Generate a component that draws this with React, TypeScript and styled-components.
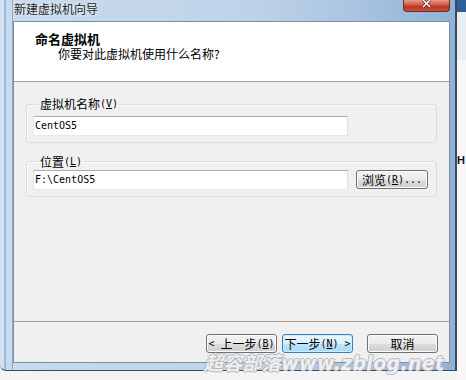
import React from 'react';
import styled, { createGlobalStyle } from 'styled-components';

const GlobalStyle = createGlobalStyle`
  html, body {
    margin: 0;
    padding: 0;
  }
  body {
    background: #f2f2f2;
    font-family: "Noto Sans CJK SC", "Liberation Sans", sans-serif;
    font-size: 12px;
    color: #000;
  }
`;

const cjk = `"Noto Sans CJK SC", "Liberation Sans", sans-serif`;
const mono = `"DejaVu Sans Mono", "Liberation Mono", "Noto Sans CJK SC", monospace`;

// Desktop behind the dialog
const Desktop = styled.div`
  position: relative;
  display: flex;
  width: 466px;
  height: 380px;
  overflow: hidden;
  background: #f3f3f3;
`;

const Window = styled.div`
  width: 457px;
  height: 371px;
  box-sizing: border-box;
  display: flex;
  flex-direction: column;
  padding: 0 5px 7px 13px;
  border-right: 2px solid #3b4b5e;
  border-bottom: 1px solid #3b4b5e;
  border-bottom-left-radius: 6px;
  background:
    linear-gradient(90deg, #d3e2f1 0 4px, #9fb8d2 4px 6px, #c8daed 6px 12px, #90a6be 12px 13px) left top / 13px 100% no-repeat,
    linear-gradient(90deg, #c9dbed 0%, #bfd3e8 55%, #a7c3e0 80%, #8fb2d6 100%);
`;

const TitleBar = styled.div`
  height: 21px;
  display: flex;
  align-items: flex-start;
  justify-content: space-between;
`;

const Title = styled.div`
  padding: 1px 0 0 1px;
  font-size: 12px;
  line-height: 15px;
  color: #262626;
  text-shadow: 0 0 4px rgba(255, 255, 255, 0.9);
`;

const CloseButton = styled.div`
  width: 47px;
  height: 12px;
  box-sizing: border-box;
  display: flex;
  justify-content: center;
  border: 1px solid #6b2c25;
  border-top: none;
  border-radius: 0 0 4px 4px;
  background: linear-gradient(#e49a8c, #d05a45 45%, #b9341f 60%, #c8543c);
`;

const Client = styled.div`
  flex: 1;
  display: flex;
  flex-direction: column;
  border: 1px solid #7d8ea3;
  background: #f0f0f0;
`;

const Header = styled.div`
  height: 60px;
  box-sizing: border-box;
  display: flex;
  flex-direction: column;
  gap: 1px;
  padding: 10px 0 0 21px;
  background: #fff;
  border-bottom: 1px solid #a0a0a0;
`;

const HeaderTitle = styled.div`
  font-weight: bold;
  font-size: 13px;
  line-height: 14px;
`;

const HeaderSub = styled.div`
  margin-left: 23px;
  font-size: 12px;
  line-height: 14px;
`;

const Body = styled.div`
  flex: 1;
  display: flex;
  flex-direction: column;
  gap: 12px;
  padding: 15px 12px 0;
`;

const GroupBox = styled.fieldset<{ $padTop: number }>`
  margin: 0;
  min-width: 0;
  padding: ${p => p.$padTop}px 6px 6px;
  border: 1px solid #d5dfe5;
  border-radius: 3px;
  box-shadow: inset 1px 1px 0 #fbfbfb;
`;

const Legend = styled.legend`
  display: flex;
  align-items: center;
  height: 14px;
  margin-left: 6px;
  padding: 0 1px;
  font-size: 12px;
  line-height: 14px;
`;

const Row = styled.div`
  display: flex;
  align-items: center;
  gap: 8px;
`;

const TextBox = styled.input`
  width: 315px;
  height: 20px;
  box-sizing: border-box;
  margin: 0;
  padding: 0 1px;
  border: 1px solid;
  border-color: #abadb3 #dbdfe6 #e3e9ef #e2e3ea;
  background: #fff;
  font-family: ${mono};
  font-size: 10px;
  color: #000;
  outline: none;
`;

const Mono = styled.span`
  font-family: ${mono};
  font-size: 10px;
  line-height: 12px;
`;

const Key = styled.span`
  text-decoration: underline;
`;

const Button = styled.button<{ $default?: boolean; $width?: number }>`
  width: ${p => p.$width ?? 71}px;
  height: 19px;
  box-sizing: border-box;
  margin: 0;
  padding: 0;
  display: flex;
  align-items: center;
  justify-content: center;
  font-family: ${cjk};
  font-size: 12px;
  line-height: 17px;
  color: #000;
  border-radius: 3px;
  border: 1px solid ${p => (p.$default ? '#3c7fb1' : '#707070')};
  box-shadow: inset 0 0 0 1px ${p => (p.$default ? '#cbeefc' : '#fcfcfc')};
  background: ${p =>
    p.$default
      ? 'linear-gradient(#eaf6fd 0%, #d9f0fc 50%, #bee6fd 50%, #a7d9f5 100%)'
      : 'linear-gradient(#f2f2f2 0%, #ebebeb 50%, #dddddd 50%, #cfcfcf 100%)'};
`;

const Footer = styled.div`
  height: 41px;
  box-sizing: border-box;
  display: flex;
  justify-content: flex-end;
  align-items: flex-start;
  gap: 14px;
  padding: 12px 11px 0;
  border-top: 1px solid #a0a0a0;
`;

const ButtonPair = styled.div`
  display: flex;
  gap: 5px;
`;

// window of another app peeking out on the right
const RightStrip = styled.div`
  flex: 1;
  padding-top: 154px;
  box-sizing: border-box;
  height: 100%;
  font-family: "Liberation Sans", sans-serif;
  font-weight: bold;
  font-size: 11px;
  color: #111;
  background: linear-gradient(#2f5f98 0 12px, #e9ecf0 12px 60px, #f7f7f7 60px);
`;

const Watermark = styled.div`
  position: absolute;
  left: 204px;
  top: 348px;
  font-family: "DejaVu Sans", "Noto Sans CJK SC", sans-serif;
  font-style: italic;
  font-weight: bold;
  font-size: 19px;
  letter-spacing: 0.3px;
  color: rgba(250, 250, 250, 0.85);
  text-shadow: -1px 0 #b4b8bd, 1px 0 #b4b8bd, 0 -1px #b4b8bd, 0 1px #b4b8bd;
  white-space: nowrap;
`;

const Accel = ({ k }: { k: string }) => (
  <Mono>
    (<Key>{k}</Key>)
  </Mono>
);

export default function App() {
  return (
    <>
      <GlobalStyle />
      <Desktop>
        <Window>
          <TitleBar>
            <Title>新建虚拟机向导</Title>
            <CloseButton>
              <svg width="11" height="8" viewBox="0 0 11 8">
                <path d="M2 0 L9 7 M9 0 L2 7" stroke="#5a1e16" strokeWidth="3" />
                <path d="M2 0 L9 7 M9 0 L2 7" stroke="#fff" strokeWidth="1.6" />
              </svg>
            </CloseButton>
          </TitleBar>

          <Client>
            <Header>
              <HeaderTitle>命名虚拟机</HeaderTitle>
              <HeaderSub>你要对此虚拟机使用什么名称?</HeaderSub>
            </Header>

            <Body>
              <GroupBox $padTop={4}>
                <Legend>
                  虚拟机名称<Accel k="V" />
                </Legend>
                <TextBox defaultValue="CentOS5" readOnly />
              </GroupBox>

              <GroupBox $padTop={1}>
                <Legend>
                  位置<Accel k="L" />
                </Legend>
                <Row>
                  <TextBox defaultValue="F:\CentOS5" readOnly />
                  <Button $width={72}>
                    浏览<Accel k="R" />
                    <Mono>...</Mono>
                  </Button>
                </Row>
              </GroupBox>
            </Body>

            <Footer>
              <ButtonPair>
                <Button>
                  <Mono>&lt;&nbsp;</Mono>上一步<Accel k="B" />
                </Button>
                <Button $default>
                  下一步<Accel k="N" />
                  <Mono>&nbsp;&gt;</Mono>
                </Button>
              </ButtonPair>
              <Button>取消</Button>
            </Footer>
          </Client>
        </Window>
        <RightStrip>H</RightStrip>
        <Watermark>超容部落www.zblog.net</Watermark>
      </Desktop>
    </>
  );
}
